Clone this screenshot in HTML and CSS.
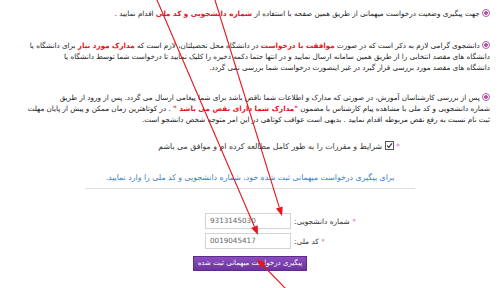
FILE: index.html
```html
<!DOCTYPE html>
<html lang="fa">
<head>
<meta charset="utf-8">
<link rel="stylesheet" href="styles.css">
</head>
<body>
<div class="page" dir="rtl">
  <ul class="notes">
    <li class="note first"><span class="bullet"></span> جهت پیگیری وضعیت درخواست میهمانی از طریق همین صفحه با استفاده از <span class="red">شماره دانشجویی و کد ملی</span> اقدام نمایید .</li>
    <li class="note"><span class="bullet"></span> دانشجوی گرامی لازم به ذکر است که در صورت <span class="red">موافقت با درخواست</span> در دانشگاه محل تحصیلتان، لازم است که <span class="red">مدارک مورد نیاز</span> برای دانشگاه یا<br>دانشگاه های مقصد انتخابی را از طریق همین سامانه ارسال نمایید و در انتها حتما دکمه ذخیره را کلیک نمایید تا درخواست شما توسط دانشگاه یا<br>دانشگاه های مقصد مورد بررسی قرار گیرد در غیر اینصورت درخواست شما بررسی نمی گردد.</li>
    <li class="note"><span class="bullet"></span> پس از بررسی کارشناسان آموزش، در صورتی که مدارک و اطلاعات شما ناقص باشد برای شما پیغامی ارسال می گردد. پس از ورود از طریق<br>شماره دانشجویی و کد ملی با مشاهده پیام کارشناس با مضمون <span class="red">"مدارک شما دارای نقص می باشد "</span> . در کوتاهترین زمان ممکن و پیش از پایان مهلت<br>ثبت نام نسبت به رفع نقص مربوطه اقدام نمایید . بدیهی است عواقب کوتاهی در این امر متوجه شخص دانشجو است.</li>
  </ul>
  <div class="agree"><span class="req">*</span> <span class="chk"><svg width="9" height="9" viewBox="0 0 9 9"><rect x="0.5" y="0.5" width="8" height="8" fill="#fff" stroke="#555"/><path d="M2 4.6 L3.8 6.4 L7 2.4" fill="none" stroke="#333" stroke-width="1.2"/></svg></span> شرایط و مقررات را به طور کامل مطالعه کرده ام و موافق می باشم</div>
  <div class="hint">برای پیگیری درخواست میهمانی ثبت شده خود، شماره دانشجویی و کد ملی را وارد نمایید.</div>
  <div class="form" dir="ltr">
    <div class="input">9313145030</div>
    <div class="label" dir="rtl"><span class="req">*</span> شماره دانشجویی:</div>
    <div class="input">0019045417</div>
    <div class="label" dir="rtl"><span class="req">*</span> کد ملی:</div>
  </div>
  <div class="actions"><button class="btn" type="button">پیگیری درخواست میهمانی ثبت شده</button></div>
  <svg class="arrows" width="500" height="288" viewBox="0 0 500 288">
    <g stroke="#e8141c" stroke-width="1.1" fill="none">
      <line x1="157" y1="0" x2="254.5" y2="226.7"/>
      <line x1="215" y1="0" x2="279.3" y2="207.4"/>
      <line x1="286" y1="289" x2="263.2" y2="265.5"/>
    </g>
    <g fill="#e8141c">
      <polygon points="258,235 251.2,228.1 257.7,225.3"/>
      <polygon points="282,216 276,208.4 282.7,206.4"/>
      <polygon points="257,259 265.8,263 260.7,267.9"/>
    </g>
  </svg>
</div>
</body>
</html>
```
FILE: styles.css
```css
html, body {
  margin: 0;
  padding: 0;
  background: #fff;
}
.page {
  position: relative;
  width: 500px;
  height: 288px;
  overflow: hidden;
  font-family: "DejaVu Sans", sans-serif;
  font-size: 7.4px;
  color: #1e1e1e;
}
.notes {
  list-style: none;
  margin: 0;
  padding: 8px 10px 0 4px;
  font-size: 7.2px;
  letter-spacing: -0.12px;
}
.note {
  line-height: 11px;
  margin-bottom: 19px;
  white-space: nowrap;
}
.note.first {
  margin-bottom: 21px;
}
.bullet {
  display: inline-block;
  width: 6px;
  height: 6px;
  border: 1px solid #b45aa6;
  border-radius: 50%;
  background: radial-gradient(circle, #b45aa6 0 1.6px, #fff 2px);
  vertical-align: -1px;
}
.red {
  color: #e8141c;
  font-weight: bold;
}
.agree {
  margin: -3px 100px 0 0;
  line-height: 12px;
  font-size: 7.8px;
  color: #333;
}
.req {
  color: #c266b3;
}
.chk {
  display: inline-block;
  vertical-align: -1px;
}
.chk svg {
  display: block;
}
.hint {
  margin: 19px 85px 0 85px;
  padding-bottom: 5px;
  border-bottom: 1px solid #dedede;
  color: #3b7fc8;
  text-align: center;
  line-height: 11px;
  font-size: 7.8px;
}
.form {
  display: grid;
  grid-template-columns: 86px auto;
  column-gap: 3px;
  row-gap: 4px;
  align-items: center;
  margin: 24px 0 0 205px;
}
.input {
  height: 16px;
  box-sizing: border-box;
  border: 1px solid #d4d4d4;
  font-family: "DejaVu Sans", sans-serif;
  font-size: 7.2px;
  color: #666;
  line-height: 14px;
  padding-left: 4px;
}
.label {
  text-align: right;
  justify-self: start;
  color: #333;
}
.actions {
  display: flex;
  justify-content: center;
  margin-top: 7px;
}
.btn {
  font-family: "DejaVu Sans", sans-serif;
  font-size: 7px;
  color: #fff;
  background: linear-gradient(#8a4fbf, #6d33a0);
  border: 1px solid #5e2a8c;
  border-radius: 0;
  height: 15px;
  padding: 0 4px;
  line-height: 13px;
}
.arrows {
  position: absolute;
  top: 0;
  left: 0;
  pointer-events: none;
}
```
